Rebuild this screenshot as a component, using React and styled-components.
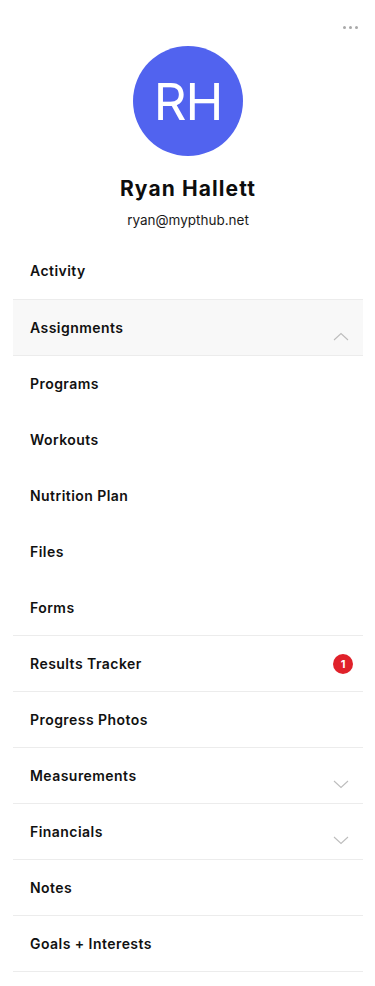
import React from "react";
import styled, { createGlobalStyle } from "styled-components";

const GlobalStyle = createGlobalStyle`
    body {
        margin: 0;
        background: #fff;
        font-family: "Inter", "Noto Sans", sans-serif;
        color: #111;
    }
`;

const Page = styled.div`
    width: 375px;
    min-height: 986px;
    background: #fff;
    padding: 0 12px 0 13px;
    box-sizing: border-box;
`;

const TopBar = styled.div`
    display: flex;
    justify-content: flex-end;
    height: 36px;
    padding-top: 20px;
    box-sizing: border-box;
`;

const MoreButton = styled.button`
    border: 0;
    background: none;
    padding: 0;
    margin-right: 5px;
    height: 14px;
    display: flex;
    align-items: center;
    gap: 3px;
    cursor: pointer;
`;

const Dot = styled.span`
    width: 3px;
    height: 3px;
    border-radius: 50%;
    background: #a9a9a9;
`;

const Profile = styled.div`
    display: flex;
    flex-direction: column;
    align-items: center;
    margin-top: 10px;
`;

const Avatar = styled.div`
    width: 110px;
    height: 110px;
    border-radius: 50%;
    background: #5163ef;
    color: #fff;
    display: flex;
    align-items: center;
    justify-content: center;
    font-size: 51px;
    font-weight: 400;
    letter-spacing: -1px;
`;

const Name = styled.h2`
    margin: 20px 0 0;
    font-size: 21px;
    font-weight: 700;
    line-height: 26px;
    letter-spacing: 1.1px;
    color: #0d0d0d;
`;

const Email = styled.div`
    margin-top: 9px;
    font-size: 13.5px;
    line-height: 18px;
    color: #1a1a1a;
`;

const Menu = styled.nav`
    margin-top: 14px;
    display: flex;
    flex-direction: column;
`;

const Row = styled.div`
    position: relative;
    height: ${(p) => (p.$topBorder ? "57px" : "56px")};
    box-sizing: border-box;
    display: flex;
    align-items: center;
    padding: 0 10px 0 17px;
    background: ${(p) => (p.$active ? "#f8f8f8" : "transparent")};
    border-bottom: 1px solid ${(p) => (p.$divider ? "#ececec" : "transparent")};
    ${(p) => p.$topBorder && "border-top: 1px solid #ececec;"}
`;

const Label = styled.span`
    flex: 1;
    font-size: 14px;
    font-weight: 600;
    letter-spacing: 0.45px;
    color: #111;
`;

const Badge = styled.span`
    width: 20px;
    height: 20px;
    border-radius: 50%;
    background: #e0212a;
    color: #fff;
    font-size: 11px;
    font-weight: 700;
    display: flex;
    align-items: center;
    justify-content: center;
`;

const Chevron = styled.svg`
    position: absolute;
    right: 14px;
    bottom: 14px;
    width: 16px;
    height: 9px;
`;

const items = [
    { label: "Activity" },
    { label: "Assignments", active: true, chevron: "up", divider: true, topBorder: true },
    { label: "Programs" },
    { label: "Workouts" },
    { label: "Nutrition Plan" },
    { label: "Files" },
    { label: "Forms", divider: true },
    { label: "Results Tracker", badge: 1, divider: true },
    { label: "Progress Photos", divider: true },
    { label: "Measurements", chevron: "down", divider: true },
    { label: "Financials", chevron: "down", divider: true },
    { label: "Notes", divider: true },
    { label: "Goals + Interests", divider: true },
];

const ChevronIcon = ({ dir }) => (
    <Chevron viewBox="0 0 16 9" fill="none">
        <path
            d={dir === "up" ? "M1 8 L8 1.5 L15 8" : "M1 1 L8 7.5 L15 1"}
            stroke="#bdbdbd"
            strokeWidth="1.1"
        />
    </Chevron>
);

export default function App() {
    return (
        <>
            <GlobalStyle />
            <Page>
                <TopBar>
                    <MoreButton aria-label="More">
                        <Dot />
                        <Dot />
                        <Dot />
                    </MoreButton>
                </TopBar>
                <Profile>
                    <Avatar>RH</Avatar>
                    <Name>Ryan Hallett</Name>
                    <Email>ryan@mypthub.net</Email>
                </Profile>
                <Menu>
                    {items.map((item) => (
                        <Row
                            key={item.label}
                            $active={item.active}
                            $divider={item.divider}
                            $topBorder={item.topBorder}
                        >
                            <Label>{item.label}</Label>
                            {item.badge && <Badge>{item.badge}</Badge>}
                            {item.chevron && <ChevronIcon dir={item.chevron} />}
                        </Row>
                    ))}
                </Menu>
            </Page>
        </>
    );
}
